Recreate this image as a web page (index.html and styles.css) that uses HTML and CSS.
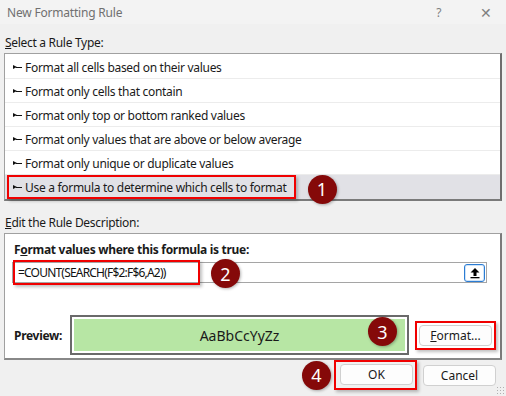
FILE: index.html
```html
<!DOCTYPE html>
<html lang="en">
<head>
  <meta charset="UTF-8" />
  <title>New Formatting Rule</title>
  <link rel="stylesheet" href="styles.css">
</head>
<body>
  <div id="dialog">
    <div class="titlebar">
      <span class="title">New Formatting Rule</span>
      <span class="help">?</span>
      <span class="close">✕</span>
    </div>

    <div class="content">
      <div class="label"><u>S</u>elect a Rule Type:</div>
      <div class="rule-list">
        <div class="rule"><span class="entry"><span class="arrow"></span>Format all cells based on their values</span></div>
        <div class="rule"><span class="entry"><span class="arrow"></span>Format only cells that contain</span></div>
        <div class="rule"><span class="entry"><span class="arrow"></span>Format only top or bottom ranked values</span></div>
        <div class="rule"><span class="entry"><span class="arrow"></span>Format only values that are above or below average</span></div>
        <div class="rule"><span class="entry"><span class="arrow"></span>Format only unique or duplicate values</span></div>
        <div class="rule selected">
          <span class="entry mark"><span class="arrow"></span>Use a formula to determine which cells to format</span>
          <span class="badge badge-1">1</span>
        </div>
      </div>

      <div class="label label-edit"><u>E</u>dit the Rule Description:</div>
      <div class="edit-box">
        <div class="formula-label">F<u>o</u>rmat values where this formula is true:</div>
        <div class="formula-input">
          <span class="formula-text mark">=COUNT(SEARCH(F$2:F$6,A2))</span>
          <span class="badge badge-2">2</span>
          <span class="collapse-btn">
            <svg width="12" height="12" viewBox="0 0 12 12">
              <path d="M6 1 L10.5 5.5 L7.5 5.5 L7.5 9 L4.5 9 L4.5 5.5 L1.5 5.5 Z" fill="#000"/>
              <rect x="1.5" y="10" width="9" height="1.3" fill="#000"/>
            </svg>
          </span>
        </div>

        <div class="preview-row">
          <span class="preview-label">Preview:</span>
          <div class="preview-box">
            <div class="preview-fill">AaBbCcYyZz</div>
            <span class="badge badge-3">3</span>
          </div>
          <span class="mark btn-mark">
            <button class="btn format-btn"><u>F</u>ormat...</button>
          </span>
        </div>
      </div>

      <div class="footer">
        <span class="badge badge-4">4</span>
        <span class="mark btn-mark">
          <button class="btn">OK</button>
        </span>
        <button class="btn cancel-btn">Cancel</button>
        <span class="grip"></span>
      </div>
    </div>
  </div>
</body>
</html>
```

FILE: styles.css
```css
body {
  margin: 0;
  font-family: 'Noto Sans', 'Open Sans', sans-serif;
  font-size: 12px;
  letter-spacing: -0.3px;
  color: #1a1a1a;
  background: #f0f0f0;
}

#dialog {
  width: 506px;
  height: 396px;
  background: #f0f0f0;
  position: relative;
  overflow: hidden;
}

.titlebar {
  height: 24px;
  display: flex;
  align-items: center;
  background: #f3f3f3;
  color: #707070;
  font-size: 12px;
  letter-spacing: -0.2px;
  padding-left: 7px;
}

.titlebar .title {
  flex: 1;
}

.titlebar .help {
  width: 14px;
  margin-right: 30px;
  color: #808080;
}

.titlebar .close {
  margin-right: 14px;
  font-size: 14px;
  color: #808080;
}

.content {
  padding: 0 4px;
}

.label {
  margin-top: 11px;
  height: 16px;
  line-height: 16px;
  padding-left: 1px;
}

.label-edit {
  margin-top: 14px;
}

.rule-list {
  margin-top: 2px;
  background: #fff;
  border: 1px solid #a0a0a0;
  border-right: 2px solid #6e6e6e;
  border-bottom: 2px solid #7a7a7a;
  padding-top: 1px;
}

.rule {
  height: 24px;
  box-sizing: border-box;
  border-bottom: 1px solid #ececec;
  padding-left: 2px;
  display: flex;
  align-items: center;
}

.rule.selected {
  background: #e1e1e6;
  border-bottom: none;
}

.entry {
  height: 24px;
  box-sizing: border-box;
  border: 2px solid transparent;
  padding: 1px 7px 0 4px;
  display: inline-flex;
  align-items: center;
}

.arrow {
  display: inline-block;
  width: 9px;
  height: 5px;
  margin-right: 3px;
  background:
    linear-gradient(#111, #111) 3px 2px / 6px 1.4px no-repeat;
  position: relative;
}

.arrow::before {
  content: "";
  position: absolute;
  left: 0;
  top: 0;
  border-left: 4px solid #111;
  border-top: 2.5px solid transparent;
  border-bottom: 2.5px solid transparent;
}

.mark {
  border: 2px solid #f00000 !important;
  box-shadow: 2px 2px 3px rgba(0, 0, 0, 0.25);
}

.badge {
  width: 29px;
  height: 29px;
  border-radius: 50%;
  background: #850909;
  color: #fff;
  font-size: 18px;
  letter-spacing: 0;
  display: inline-flex;
  align-items: center;
  justify-content: center;
  box-shadow: 1px 1px 3px rgba(0, 0, 0, 0.3);
  flex: none;
}

.badge-1 {
  margin: -3px 0 -5px 12px;
  position: relative;
  top: 1px;
}

.edit-box {
  margin-top: 2px;
  background: #fff;
  border: 1px solid #a0a0a0;
  border-right: 2px solid #7a7a7a;
  border-bottom: 2px solid #888;
  height: 127px;
  box-sizing: border-box;
  padding: 7px 4px 0 7px;
}

.formula-label {
  font-weight: bold;
  padding-left: 2px;
  height: 17px;
  line-height: 17px;
}

.formula-input {
  margin: 4px 9px 0 0;
  height: 21px;
  box-sizing: border-box;
  border: 1px solid #a5a5a5;
  display: flex;
  align-items: center;
}

.formula-text {
  width: 187px;
  box-sizing: border-box;
  height: 25px;
  padding-left: 3px;
  display: flex;
  align-items: center;
  color: #111;
  letter-spacing: -0.8px;
}

.badge-2 {
  margin-left: 11px;
  position: relative;
  top: 1px;
}

.collapse-btn {
  margin-left: auto;
  margin-right: 1px;
  width: 21px;
  height: 18px;
  box-sizing: border-box;
  border: 1px solid #2b7cd3;
  border-radius: 3px;
  box-shadow: inset 0 0 0 1px #cfe3f7;
  display: flex;
  align-items: center;
  justify-content: center;
}

.preview-row {
  margin-top: 32px;
  display: flex;
  align-items: center;
}

.preview-label {
  font-weight: bold;
  width: 56px;
  padding-left: 2px;
}

.preview-box {
  width: 339px;
  height: 40px;
  box-sizing: border-box;
  border: 2px solid #6a6a6a;
  padding: 2px;
  position: relative;
}

.preview-fill {
  height: 100%;
  background: #b7e6a4;
  display: flex;
  align-items: center;
  justify-content: center;
  font-size: 14px;
  letter-spacing: 0;
  color: #1a1a1a;
}

.badge-3 {
  position: absolute;
  right: 10px;
  top: 0;
}

.btn-mark {
  display: inline-flex;
  padding: 2px;
}

.preview-row .btn-mark {
  margin-left: 6px;
}

.btn {
  width: 73px;
  height: 21px;
  font-family: inherit;
  font-size: 12px;
  letter-spacing: 0;
  color: #1a1a1a;
  background: #fdfdfd;
  border: 1px solid #d0d0d0;
  border-radius: 4px;
  padding: 0;
}

.footer {
  display: flex;
  justify-content: flex-end;
  align-items: center;
  padding-right: 6px;
  position: relative;
}

.badge-4 {
  margin-right: 3px;
}

.footer .btn-mark {
  padding: 2px 2px 3px 4px;
}

.cancel-btn {
  margin-left: 6px;
}

.grip {
  position: absolute;
  right: -2px;
  bottom: -4px;
  width: 8px;
  height: 8px;
  background: radial-gradient(circle, #b0b0b0 0.8px, transparent 1px) 0 0 / 3px 3px;
}
```
